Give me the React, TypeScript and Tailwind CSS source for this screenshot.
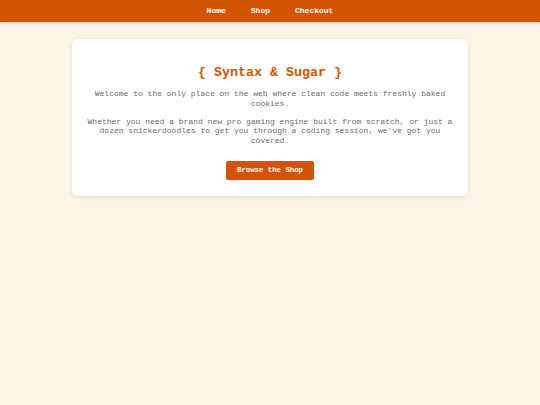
export default function App() {
  return (
    <div className="min-h-[405px] bg-[#fdf5e6] font-['Liberation_Mono',monospace]">
      <nav className="h-[22px] bg-[#d35400] flex items-center justify-center gap-[25px] shadow-sm">
        <a className="text-[8px] font-bold text-white">Home</a>
        <a className="text-[8px] font-bold text-white">Shop</a>
        <a className="text-[8px] font-bold text-white">Checkout</a>
      </nav>

      <main className="mx-auto mt-[17px] w-[396px] rounded-[5px] bg-white px-[13px] pt-[26px] pb-[16px] text-center shadow-[0_1px_4px_rgba(0,0,0,0.12)]">
        <h1 className="text-[13.33px] leading-[16px] font-bold text-[#d35400]">
          {"{ Syntax & Sugar }"}
        </h1>
        <p className="mt-[8px] text-[8px] leading-[9.6px] text-[#6b6b6b]">
          Welcome to the only place on the web where clean code meets freshly baked cookies.
        </p>
        <p className="mt-[8.5px] text-[8px] leading-[9.6px] text-[#6b6b6b]">
          Whether you need a brand new pro gaming engine built from scratch, or just a dozen
          snickerdoodles to get you through a coding session, we've got you covered.
        </p>
        <button className="mt-[16px] h-[19px] px-[11px] rounded-[2px] bg-[#d35400] text-[7.33px] font-bold text-white">
          Browse the Shop
        </button>
      </main>
    </div>
  );
}
